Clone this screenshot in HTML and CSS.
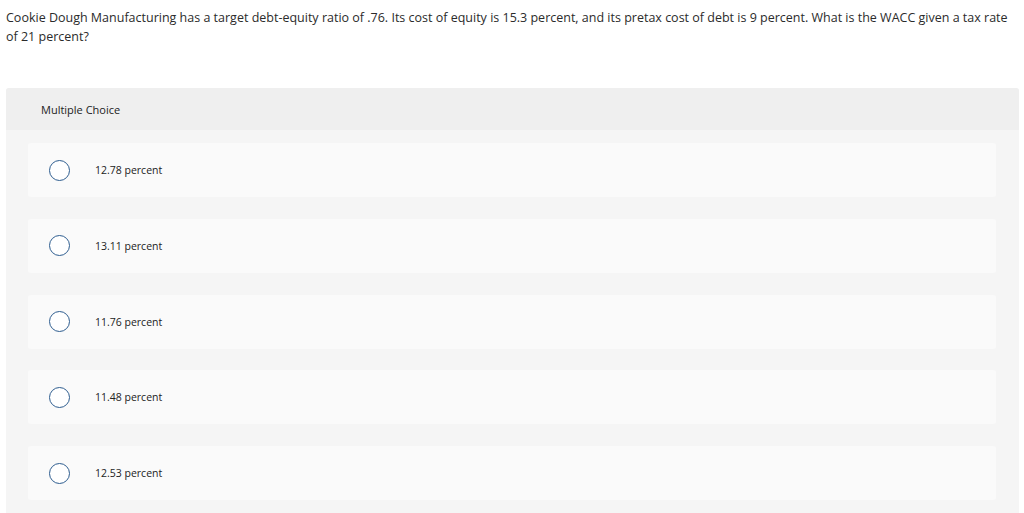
FILE: index.html
```html
<!DOCTYPE html>
<html>
<head>
<meta charset="utf-8">
<link rel="stylesheet" href="styles.css">
</head>
<body>
<div class="page">
  <p class="question">Cookie Dough Manufacturing has a target debt-equity ratio of .76. Its cost of equity is 15.3 percent, and its pretax cost of debt is 9 percent. What is the WACC given a tax rate of 21 percent?</p>
  <div class="panel">
    <div class="panel-head">Multiple Choice</div>
    <div class="panel-body">
      <div class="option"><span class="radio"></span><span class="label">12.78 percent</span></div>
      <div class="option"><span class="radio"></span><span class="label">13.11 percent</span></div>
      <div class="option"><span class="radio"></span><span class="label">11.76 percent</span></div>
      <div class="option"><span class="radio"></span><span class="label">11.48 percent</span></div>
      <div class="option"><span class="radio"></span><span class="label">12.53 percent</span></div>
    </div>
  </div>
</div>
</body>
</html>
```
FILE: styles.css
```css
html, body {
  margin: 0;
  padding: 0;
  background: #ffffff;
}
body {
  font-family: "Open Sans", "Liberation Sans", sans-serif;
  color: #333333;
}
.page {
  padding: 0 5px 0 6px;
}
.question {
  margin: 0;
  padding-top: 8px;
  font-size: 12.5px;
  line-height: 19px;
  color: #2b2b2b;
}
.panel {
  margin-top: 42px;
  background: #f5f5f5;
  border-radius: 3px 3px 0 0;
  overflow: hidden;
}
.panel-head {
  height: 42px;
  background: #efefef;
  display: flex;
  align-items: center;
  padding-left: 35px;
  font-size: 11px;
  color: #222;
}
.panel-body {
  padding: 13px 23px 20px 22px;
  display: flex;
  flex-direction: column;
  gap: 21.75px;
}
.option {
  height: 54px;
  background: #fafafa;
  border-radius: 3px;
  display: flex;
  align-items: center;
  padding-left: 21px;
}
.radio {
  width: 19px;
  height: 19px;
  border: 1.5px solid #2e5d8f;
  border-radius: 50%;
  background: #fff;
  flex: none;
}
.label {
  margin-left: 25px;
  font-size: 10.5px;
  color: #222;
}
```
